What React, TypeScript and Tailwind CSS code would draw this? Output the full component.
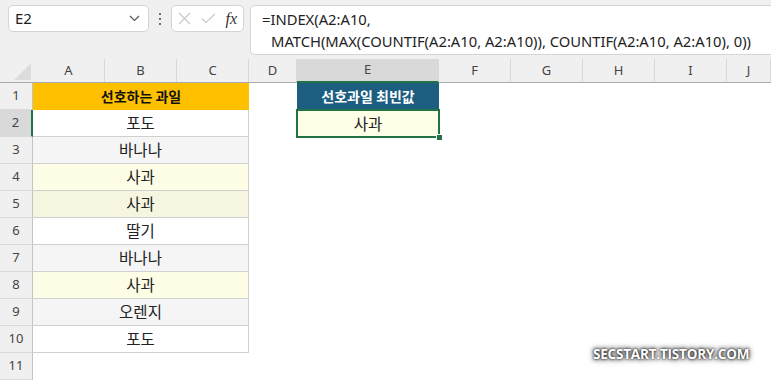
import React from 'react';

const COLS = ['A', 'B', 'C', 'D', 'E', 'F', 'G', 'H', 'I', 'J'];
const COL_W = ['w-[72px]', 'w-[72px]', 'w-[72px]', 'w-[48px]', 'w-[142px]', 'w-[72px]', 'w-[72px]', 'w-[72px]', 'w-[72px]', 'w-[44px]'];

const fruits: { name: string; bg: string }[] = [
  { name: '포도', bg: 'bg-white' },
  { name: '바나나', bg: 'bg-[#f5f5f5]' },
  { name: '사과', bg: 'bg-[#fefee6]' },
  { name: '사과', bg: 'bg-[#f6f6e0]' },
  { name: '딸기', bg: 'bg-white' },
  { name: '바나나', bg: 'bg-[#f5f5f5]' },
  { name: '사과', bg: 'bg-[#fefee6]' },
  { name: '오렌지', bg: 'bg-[#f5f5f5]' },
  { name: '포도', bg: 'bg-white' },
];

const kr = "font-['Malgun_Gothic','Noto_Sans_CJK_KR',sans-serif]";
const ui = "font-['Noto_Sans','Noto_Sans_CJK_KR',sans-serif]";

const RowHead: React.FC<{ n: number; active?: boolean }> = ({ n, active }) => (
  <div
    className={`w-[33px] shrink-0 flex items-center justify-center text-[13px] text-[#444] border-b border-[#dadada] ${ui} ${
      active ? 'bg-[#d9d9d9] border-r-2 border-r-[#217346]' : 'bg-[#f0f0f0] border-r border-r-[#c4c4c4]'
    }`}
  >
    {n}
  </div>
);

const FormulaBar: React.FC = () => (
  <div className={`flex items-start h-[59px] pt-[5px] pl-[8px] gap-[6px] ${ui}`}>
    <div className="w-[141px] h-[27px] bg-white border border-[#d4d4d4] rounded-[5px] flex items-center justify-between pl-[6px] pr-[8px]">
      <span className="text-[15px] text-[#222]">E2</span>
      <svg width="11" height="7" viewBox="0 0 11 7" fill="none" stroke="#555" strokeWidth="1.2">
        <path d="M1 1l4.5 4.5L10 1" />
      </svg>
    </div>
    <div className="w-[10px] h-[27px] flex flex-col items-center justify-center gap-[3px]">
      <span className="w-[2px] h-[2px] bg-[#444] rounded-full" />
      <span className="w-[2px] h-[2px] bg-[#444] rounded-full" />
      <span className="w-[2px] h-[2px] bg-[#444] rounded-full" />
    </div>
    <div className="w-[73px] h-[27px] bg-white border border-[#d4d4d4] rounded-[5px] flex items-center justify-between px-[6px]">
      <svg width="13" height="13" viewBox="0 0 13 13" stroke="#c8c8c8" strokeWidth="1.2">
        <path d="M1 1l11 11M12 1L1 12" />
      </svg>
      <svg width="15" height="11" viewBox="0 0 15 11" fill="none" stroke="#c8c8c8" strokeWidth="1.2">
        <path d="M1 5.5l4 4L14 1" />
      </svg>
      <span className="font-['Liberation_Serif',serif] italic text-[16px] text-[#333] leading-none">fx</span>
    </div>
    <div className="flex-1 h-[50px] bg-white border border-[#d4d4d4] rounded-l-[5px] border-r-0 pl-[11px] pt-[2px] text-[14.75px] leading-[22px] text-[#222]">
      <div>=INDEX(A2:A10,</div>
      <div className="pl-[9px]">MATCH(MAX(COUNTIF(A2:A10, A2:A10)), COUNTIF(A2:A10, A2:A10), 0))</div>
    </div>
  </div>
);

export default function App() {
  return (
    <div className="w-[771px] h-[380px] bg-[#f0f0f0] overflow-hidden relative">
      <FormulaBar />

      {/* column headers */}
      <div className={`flex h-[24px] border-b border-[#ababab] ${ui}`}>
        <div className="w-[33px] shrink-0 flex items-end justify-end pr-[2px] pb-[2px]">
          <div className="w-0 h-0 border-l-[17px] border-l-transparent border-b-[17px] border-b-[#dcdcdc]" />
        </div>
        {COLS.map((c, i) => (
          <div
            key={c}
            className={`${COL_W[i]} shrink-0 flex items-center justify-center text-[13px] text-[#444] border-r border-[#d8d8d8] ${
              c === 'E' ? 'bg-[#d9d9d9] border-b-2 border-b-[#217346] -mb-px' : ''
            }`}
          >
            {c}
          </div>
        ))}
      </div>

      {/* row 1 */}
      <div className={`flex h-[27px] ${kr}`}>
        <RowHead n={1} />
        <div className="w-[216px] shrink-0 bg-[#ffc000] flex items-center justify-center text-[14px] font-bold text-[#111] border-b border-[#ffc000]">
          선호하는 과일
        </div>
        <div className="w-[48px] shrink-0 bg-white" />
        <div className="w-[142px] shrink-0 bg-[#1b5e80] flex items-center justify-center text-[14px] font-bold text-white">
          선호과일 최빈값
        </div>
        <div className="flex-1 bg-white" />
      </div>

      {/* rows 2-10 */}
      {fruits.map((f, i) => (
        <div key={i} className={`flex h-[27px] ${kr}`}>
          <RowHead n={i + 2} active={i === 0} />
          <div
            className={`w-[216px] shrink-0 ${f.bg} flex items-center justify-center text-[15.5px] text-[#222] border-b border-r border-[#d0d0d0]`}
          >
            {f.name}
          </div>
          <div className="w-[48px] shrink-0 bg-white" />
          {i === 0 ? (
            <div className="w-[142px] shrink-0 bg-[#fffee6] flex items-center justify-center text-[15.5px] text-[#222] relative">
              사과
              <div className="absolute -left-px -top-px -right-px -bottom-px border-2 border-[#217346]" />
              <div className="absolute -right-[4px] -bottom-[4px] w-[7px] h-[7px] bg-[#217346] border border-white" />
            </div>
          ) : (
            <div className="w-[142px] shrink-0 bg-white" />
          )}
          <div className="flex-1 bg-white" />
        </div>
      ))}

      {/* row 11 */}
      <div className="flex h-[27px]">
        <RowHead n={11} />
        <div className="flex-1 bg-white" />
      </div>

      <div className="absolute left-[593px] top-[344px] font-['Open_Sans',sans-serif] font-bold text-[13.5px] text-white tracking-[-0.2px] [text-shadow:0_0_2px_#111,0_0_4px_#333,0_0_6px_#555]">
        SECSTART.TISTORY.COM
      </div>
    </div>
  );
}
